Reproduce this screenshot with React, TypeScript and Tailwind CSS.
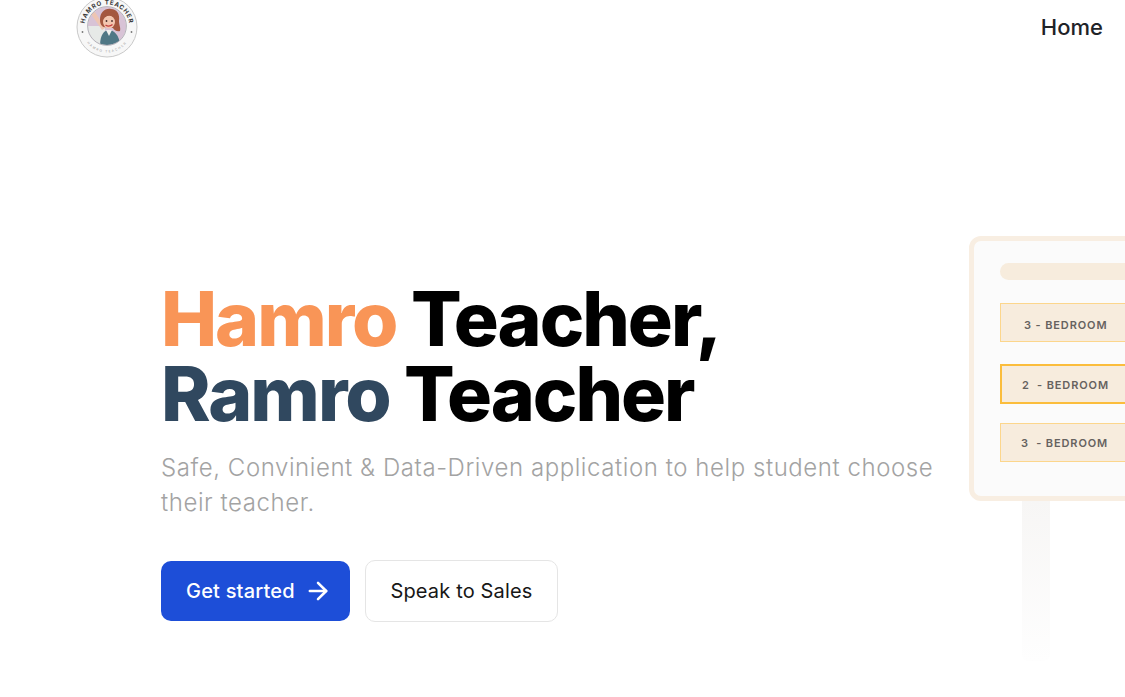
import { ArrowRight } from "lucide-react";

function Logo() {
  return (
    <svg width="62" height="62" viewBox="0 0 62 62" className="-mt-[4px] shrink-0">
      <defs>
        <path id="logoTop" d="M8.5 31a22.5 22.5 0 0 1 45 0" />
        <path id="logoBottom" d="M6 36a25.5 25.5 0 0 0 50 0" />
        <clipPath id="logoClip">
          <circle cx="31" cy="30" r="19" />
        </clipPath>
      </defs>
      <circle cx="31" cy="31" r="30" fill="#f7f7f7" stroke="#c9c9c9" strokeWidth="1" />
      <text fontSize="6.2" fontWeight="700" letterSpacing="0.7" fill="#3a3a3a" fontFamily="Inter, sans-serif">
        <textPath href="#logoTop" startOffset="50%" textAnchor="middle">
          HAMRO TEACHER
        </textPath>
      </text>
      <text fontSize="3.2" letterSpacing="1.4" fill="#999" fontFamily="Inter, sans-serif">
        <textPath href="#logoBottom" startOffset="50%" textAnchor="middle">
          HAMRO TEACHER
        </textPath>
      </text>
      <g clipPath="url(#logoClip)">
        <rect x="11" y="10" width="40" height="40" fill="#d8c3d6" />
        <rect x="12" y="30" width="17" height="20" fill="#e6e9e7" />
        <path d="M15 18l11 16 3-2-10-16z" fill="#eec5b2" />
        <path d="M24 50c0-11 4-16 9-16s11 6 11 16z" fill="#4f7785" />
        <path d="M30 34l3 6 3-6z" fill="#f0f0ee" />
        <path d="M24 24c0-8 5-12 11-11 6 0 9 5 8 12 0 4 2 7 1 10-3 1-6-1-7-3l-7-1c-3 1-6-2-6-7z" fill="#a4573f" />
        <ellipse cx="33" cy="26" rx="6" ry="6.5" fill="#f3c6b0" />
        <path d="M28 22q5-5 11 0l-1-5-7-1z" fill="#a4573f" />
        <path d="M29.5 29q3.5 2.5 7-.5" stroke="#c43d3d" strokeWidth="1.3" fill="none" />
        <circle cx="30.5" cy="25" r="0.9" fill="#4a2f2a" />
        <circle cx="36" cy="25" r="0.9" fill="#4a2f2a" />
      </g>
      <circle cx="31" cy="30" r="19.4" fill="none" stroke="#9a98a0" strokeWidth="0.7" />
      <circle cx="6.5" cy="36" r="0.9" fill="#777" />
      <circle cx="55.5" cy="36" r="0.9" fill="#777" />
    </svg>
  );
}

function BedroomRow({ label, active, className }: { label: string; active?: boolean; className: string }) {
  return (
    <div
      className={`flex w-[200px] items-center bg-[#f7ecdd] text-[11px] font-semibold tracking-[0.08em] whitespace-pre text-[#66625f] ${
        active ? "border-2 border-[#fbbd3c]" : "border border-[#fcd68c]"
      } ${className}`}
    >
      {label}
    </div>
  );
}

export default function App() {
  return (
    <div className="h-[697px] overflow-hidden bg-white font-['Inter',sans-serif]">
      {/* Nav */}
      <nav className="flex h-[56px] items-start justify-between pr-[22px] pl-[76px]">
        <Logo />
        <a className="mt-[12px] text-[22px] leading-[30px] font-medium text-[#1f2328]">Home</a>
      </nav>

      {/* Hero */}
      <main className="flex justify-between">
        <div className="pt-[225px] pl-[161px]">
          <h1 className="text-[75px] leading-[75px] font-extrabold tracking-[-0.027em] whitespace-nowrap text-black">
            <span className="text-[#f99557]">Hamro</span> Teacher,
            <br />
            <span className="text-[#30485f]">Ramro</span> Teacher
          </h1>
          <p className="mt-[19px] w-[790px] text-[24px] leading-[35px] font-light tracking-[0.0235em] text-[#a3a3a3]">
            Safe, Convinient &amp; Data-Driven application to help student choose their teacher.
          </p>
          <div className="mt-[40px] flex items-center gap-[15px]">
            <button className="flex h-[60px] w-[189px] items-center gap-[9px] rounded-[10px] bg-[#1d4ed8] pl-[25px] text-[20px] font-medium tracking-[0.01em] text-white">
              Get started
              <ArrowRight className="h-[28px] w-[28px]" strokeWidth={2.2} />
            </button>
            <button className="h-[62px] w-[193px] rounded-[10px] border border-[#e5e5e5] bg-white text-[20px] font-normal tracking-[0.008em] text-[#171717]">
              Speak to Sales
            </button>
          </div>
        </div>

        {/* Illustration */}
        <div className="w-[156px] shrink-0 overflow-hidden pt-[180px]">
          <div className="h-[265px] w-[220px] rounded-[12px] border-[5px] border-[#f8eee2] bg-[#fbfbfb] pt-[22px] pl-[26px]">
            <div className="h-[17px] w-[200px] rounded-full bg-[#f7ecdd]" />
            <BedroomRow className="mt-[23px] h-[39px] pt-[5px] pl-[23px]" label="3 - BEDROOM" />
            <BedroomRow className="mt-[22px] h-[40px] pt-[2px] pl-[20px]" active label="2  - BEDROOM" />
            <BedroomRow className="mt-[19px] h-[39px] pt-[2px] pl-[20px]" label="3  - BEDROOM" />
          </div>
          <div className="ml-[53px] h-[160px] w-[28px] rounded-b-md bg-gradient-to-b from-[#f7f6f5] to-[#fefefe]" />
        </div>
      </main>
    </div>
  );
}
